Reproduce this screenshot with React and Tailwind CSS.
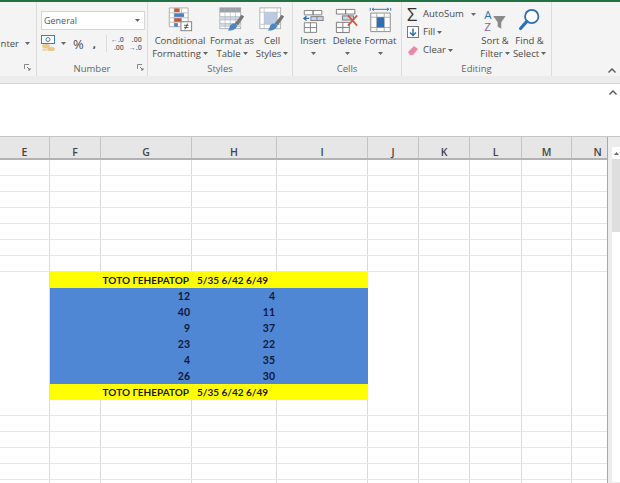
import React from "react";

const ui = { fontFamily: '"Open Sans", "Liberation Sans", sans-serif' };
const cellFont = { fontFamily: 'Lato, "Liberation Sans", sans-serif' };

const columns = [
  { name: "E", width: "w-[50px]" },
  { name: "F", width: "w-[51px]" },
  { name: "G", width: "w-[91px]" },
  { name: "H", width: "w-[85px]" },
  { name: "I", width: "w-[91px]" },
  { name: "J", width: "w-[51px]" },
  { name: "K", width: "w-[51px]" },
  { name: "L", width: "w-[52px]" },
  { name: "M", width: "w-[50px]" },
  { name: "N", width: "w-[36px]", label: "pl-[16px]" },
];

const numbers = [
  [12, 4],
  [40, 11],
  [9, 37],
  [23, 22],
  [4, 35],
  [26, 30],
];

function Caret({ className = "" }) {
  return (
    <svg width="5" height="3" viewBox="0 0 5 3" className={className}>
      <path d="M0 0h5L2.500 3z" fill="#666" />
    </svg>
  );
}

function Launcher({ className }) {
  return (
    <svg width="7" height="7" viewBox="0 0 7 7" className={`absolute ${className}`}>
      <path d="M.5 5V.5H5" fill="none" stroke="#888" />
      <path d="M3 3l3 3M6 4v2H4" fill="none" stroke="#777" />
    </svg>
  );
}

function ConditionalIcon() {
  return (
    <svg width="25" height="26" viewBox="0 0 28 29">
      <path d="M1.500 1h21v21h-21z" fill="#fff" stroke="#aaa" />
      <path d="M1 6.500h22M1 12h22M1 17h22M7 1v21M15 1v21" stroke="#bbb" />
      <rect x="7" y="1.500" width="6" height="4" fill="#c0563c" />
      <rect x="7" y="7" width="11" height="4" fill="#4c7fbd" />
      <rect x="7" y="12.500" width="8" height="4" fill="#c0563c" />
      <rect x="7" y="18" width="4" height="4" fill="#4c7fbd" />
      <rect x="14.500" y="16.500" width="12" height="10" fill="#fff" stroke="#777" />
      <path d="M18 20.500h5M18 23h5M22 18.500l-3 6.500" stroke="#444" fill="none" />
    </svg>
  );
}

function Brush() {
  return (
    <g>
      <path d="M18 19l8-10 3 2-7 10z" fill="#777" />
      <path d="M13 21c3-3 6-2 8 0 0 4-6 7-11 6 2-1 2-4 3-6z" fill="#4a86c4" />
    </g>
  );
}

function TableIcon() {
  return (
    <svg width="26" height="26" viewBox="0 0 30 30">
      <rect x="1" y="1" width="24" height="24" fill="#fff" stroke="#aaa" />
      <rect x="1" y="1" width="24" height="5" fill="#9a9fa8" />
      <rect x="1" y="11" width="24" height="4" fill="#cfd6e4" />
      <rect x="1" y="19" width="24" height="4" fill="#cfd6e4" />
      <path d="M1 6h24M1 11h24M1 15h24M1 19h24M7 1v24M13 1v24M19 1v24" stroke="#aeb4bd" strokeWidth=".7" />
      <Brush />
    </svg>
  );
}

function StylesIcon() {
  return (
    <svg width="26" height="26" viewBox="0 0 30 30">
      <rect x="1" y="1" width="24" height="24" fill="#fff" stroke="#aaa" />
      <rect x="6" y="6" width="15" height="14" fill="#bccbe4" />
      <path d="M6 1v24M21 1v24M1 6h24M1 20h24" stroke="#aeb4bd" strokeWidth=".7" />
      <Brush />
    </svg>
  );
}

function InsertIcon() {
  return (
    <svg width="21" height="24" viewBox="0 0 24 27">
      <path d="M1.500 1.500h10v5h-10zM11.500 1.500h10v5h-10z" fill="#fff" stroke="#777" />
      <path d="M1 10.500h6M4 8l-3 2.500L4 13" fill="none" stroke="#2d6fb3" strokeWidth="1.500" />
      <rect x="9" y="8.500" width="14" height="4.500" fill="#c6d4e6" stroke="#777" />
      <path d="M16 8.500v4.500" stroke="#777" />
      <path d="M1.500 15.500h14v11h-14zM1.500 21h14M8.500 15.500v11" fill="#fff" stroke="#777" />
    </svg>
  );
}

function DeleteIcon() {
  return (
    <svg width="24" height="25" viewBox="0 0 26 27">
      <path d="M1.500 1.500h10v5h-10zM11.500 1.500h10v5h-10z" fill="#fff" stroke="#777" />
      <rect x="8" y="8.500" width="12" height="4.500" fill="#c6d4e6" stroke="#777" />
      <path d="M1.500 15.500h14v11h-14zM1.500 21h14M8.500 15.500v11" fill="#fff" stroke="#777" />
      <path d="M14 8l10 11M24 8L14 19" stroke="#d2543c" strokeWidth="1.800" />
    </svg>
  );
}

function FormatIcon() {
  return (
    <svg width="23" height="26" viewBox="0 0 24 28">
      <path d="M1 1v3M23 1v3M3 2.500h18M3 2.500l2-1.500M3 2.500L5 4M21 2.500L19 1M21 2.500L19 4" stroke="#2d6fb3" fill="none" />
      <path d="M1.500 6.500h21v20h-21z" fill="#fff" stroke="#888" />
      <path d="M1.500 11h21M8 6.500v20M16 6.500v20M1.500 22h21" stroke="#aaa" />
      <rect x="8" y="11" width="8" height="11" fill="#2f6eb5" />
    </svg>
  );
}

function AccountingIcon() {
  return (
    <svg width="17" height="17" viewBox="0 0 17 17">
      <rect x=".5" y=".5" width="13" height="8" fill="#fff" stroke="#3d7cb8" />
      <circle cx="7" cy="4.500" r="2" fill="none" stroke="#3d7cb8" />
      <ellipse cx="5" cy="11" rx="4" ry="2" fill="#e7c98a" />
      <ellipse cx="10" cy="14" rx="4" ry="2" fill="#e7c98a" />
      <ellipse cx="4" cy="14.500" rx="3" ry="1.600" fill="#efdcb4" />
    </svg>
  );
}

function ChevronUp({ className = "" }) {
  return (
    <svg width="8" height="5" viewBox="0 0 8 5" className={className}>
      <path d="M.5 4.500L4 1l3.500 3.500" fill="none" stroke="#555" strokeWidth="1.400" />
    </svg>
  );
}

function BigButton({ width, icon, lines, caretBelow }) {
  return (
    <div className={`flex ${width} flex-col items-center text-[9.500px] leading-[13px] text-[#4a4a4a]`}>
      <div className="flex h-[27px] items-end">{icon}</div>
      <div className="mt-px whitespace-nowrap">{lines[0]}</div>
      {caretBelow ? (
        <Caret className="mt-[5px]" />
      ) : (
        <div className="flex items-center gap-[2px] whitespace-nowrap">
          {lines[1]}
          <Caret />
        </div>
      )}
    </div>
  );
}

function GroupLabel({ children }) {
  return (
    <div className="absolute bottom-[1px] left-0 right-0 text-center text-[9.500px] leading-[13px] text-[#666]">
      {children}
    </div>
  );
}

function Ribbon() {
  return (
    <div className="flex h-[74px] bg-[#f4f4f4]">
      {/* Alignment, cut off at the window edge */}
      <div className="relative flex w-[37px] shrink-0 items-start justify-end border-r border-[#dcdcdc] pr-[6px] pt-[35px] text-[9.500px] leading-[13px] text-[#4a4a4a]">
        <span className="mr-[6px]">nter</span>
        <Caret className="mt-[5px]" />
        <Launcher className="bottom-[5px] right-[5px]" />
      </div>

      {/* Number */}
      <div className="relative flex w-[111px] shrink-0 flex-col border-r border-[#dcdcdc] pl-[4px] pt-[9px]">
        <div className="flex h-[19px] w-[104px] items-center justify-between border border-[#d6d6d6] bg-white pl-[2px] pr-[4px] text-[9px] text-[#555]">
          General
          <Caret />
        </div>
        <div className="mt-[5px] flex items-center">
          <AccountingIcon />
          <Caret className="ml-[3px]" />
          <span className="ml-[7px] text-[13px] leading-[16px] text-[#4a4a4a]">%</span>
          <span className="ml-[9px] text-[11px] font-bold leading-[14px] text-[#444]">,</span>
          <div className="ml-[10px] h-[17px] w-px bg-[#dcdcdc]" />
          <div className="ml-[4px] flex flex-col items-end text-[7px] font-semibold leading-[8px] text-[#666]">
            <span className="text-[#2d6fb3]">←.0</span>
            <span>.00</span>
          </div>
          <div className="ml-[5px] flex flex-col items-end text-[7px] font-semibold leading-[8px] text-[#666]">
            <span>.00</span>
            <span className="text-[#2d6fb3]">→.0</span>
          </div>
        </div>
        <GroupLabel>Number</GroupLabel>
        <Launcher className="bottom-[5px] right-[3px]" />
      </div>

      {/* Styles */}
      <div className="relative flex w-[145px] shrink-0 border-r border-[#dcdcdc] pl-[5px] pt-[4px]">
        <BigButton width="w-[54px]" icon={<ConditionalIcon />} lines={["Conditional", "Formatting"]} />
        <BigButton width="w-[50px]" icon={<TableIcon />} lines={["Format as", "Table"]} />
        <BigButton width="w-[30px]" icon={<StylesIcon />} lines={["Cell", "Styles"]} />
        <GroupLabel>Styles</GroupLabel>
      </div>

      {/* Cells */}
      <div className="relative flex w-[109px] shrink-0 border-r border-[#dcdcdc] pl-[3px] pt-[4px]">
        <BigButton width="w-[34px]" icon={<InsertIcon />} lines={["Insert"]} caretBelow />
        <BigButton width="w-[34px]" icon={<DeleteIcon />} lines={["Delete"]} caretBelow />
        <BigButton width="w-[33px]" icon={<FormatIcon />} lines={["Format"]} caretBelow />
        <GroupLabel>Cells</GroupLabel>
      </div>

      {/* Editing */}
      <div className="relative flex w-[150px] shrink-0 border-r border-[#dcdcdc] pl-[5px] pt-[4px]">
        <div className="-mt-px flex w-[71px] flex-col text-[9.500px] leading-[18px] text-[#4a4a4a]">
          <div className="flex items-center">
            <span className="w-[16px] text-[18px] leading-[18px] text-[#333]">Σ</span>
            <span>AutoSum</span>
            <Caret className="ml-[7px]" />
          </div>
          <div className="flex items-center">
            <svg width="12" height="12" viewBox="0 0 12 12" className="mr-[4px]">
              <rect x=".5" y=".5" width="11" height="11" fill="#fff" stroke="#777" />
              <path d="M6 2.500v7M3 6.500L6 9.500 9 6.500" fill="none" stroke="#2d6fb3" strokeWidth="1.500" />
            </svg>
            <span>Fill</span>
            <Caret className="ml-[2px]" />
          </div>
          <div className="flex items-center">
            <svg width="12" height="11" viewBox="0 0 12 11" className="mr-[4px]">
              <path d="M1 7l6-6 4 3-5 6H3z" fill="#e78aa5" />
            </svg>
            <span>Clear</span>
            <Caret className="ml-[2px]" />
          </div>
        </div>
        <BigButton
          width="w-[34px]"
          icon={
            <svg width="24" height="25" viewBox="0 0 26 28">
              <text x="1" y="12" fontSize="13" fontFamily="Open Sans, sans-serif" fill="#2d6fb3">A</text>
              <text x="1" y="26" fontSize="13" fontFamily="Open Sans, sans-serif" fill="#8a62a8">Z</text>
              <path d="M11 9h14l-5 7v7l-4-2v-5z" fill="#8a8a8a" />
            </svg>
          }
          lines={["Sort &", "Filter"]}
        />
        <BigButton
          width="w-[35px]"
          icon={
            <svg width="23" height="25" viewBox="0 0 24 28">
              <circle cx="14.500" cy="9.500" r="7.500" fill="#fff" stroke="#2d6fb3" strokeWidth="2" />
              <path d="M9 15L2 23" stroke="#2d6fb3" strokeWidth="3.500" strokeLinecap="round" />
            </svg>
          }
          lines={["Find &", "Select"]}
        />
        <GroupLabel>Editing</GroupLabel>
      </div>

      <div className="flex flex-1 items-end justify-end pb-[3px] pr-[4px]">
        <ChevronUp />
      </div>
    </div>
  );
}

function BlankCells({ from, to }) {
  return columns.slice(from, to).map((col) => (
    <div key={col.name} className={`${col.width} shrink-0 border-r border-[#dadada]`} />
  ));
}

function TitleRow() {
  return (
    <div className="flex h-[16px]">
      <BlankCells from={0} to={1} />
      <div style={cellFont} className="flex w-[318px] shrink-0 bg-[#ffff00] text-[10px] font-bold leading-[16px] text-[#1a1a1a]">
        <div className="w-[139px] shrink-0 whitespace-nowrap text-right">ТОТО ГЕНЕРАТОР</div>
        <div className="whitespace-nowrap pl-[8px]">5/35 6/42 6/49</div>
      </div>
      <BlankCells from={5} to={10} />
    </div>
  );
}

function NumberRow({ values }) {
  return (
    <div className="flex h-[16px]">
      <BlankCells from={0} to={1} />
      <div style={cellFont} className="flex w-[318px] shrink-0 bg-[#4f87d4] text-[10.500px] font-bold leading-[16px] text-[#10183a]">
        <div className="w-[140px] shrink-0 text-right">{values[0]}</div>
        <div className="w-[87px] shrink-0 pr-[2px] text-right">{values[1]}</div>
      </div>
      <BlankCells from={5} to={10} />
    </div>
  );
}

function EmptyRow() {
  return (
    <div className="flex h-[16px] border-b-[1.500px] border-[#e6e6e6]">
      <BlankCells from={0} to={10} />
    </div>
  );
}

function Sheet() {
  return (
    <div className="flex">
      <div className="w-[608px] shrink-0 overflow-hidden border-r border-[#a8a8a8] bg-white">
        {/* Column letters */}
        <div style={ui} className="flex h-[23px] border-b-2 border-[#b2b2b2] bg-[#e6e6e6] text-[10.500px] font-semibold leading-[30px] text-[#444]">
          {columns.map((col) => (
            <div key={col.name} className={`${col.width} ${col.label || ""} shrink-0 border-r border-[#c4c4c4] text-center`}>
              {col.name}
            </div>
          ))}
        </div>
        {Array.from({ length: 7 }, (_, i) => <EmptyRow key={i} />)}
        <TitleRow />
        {numbers.map((values, i) => <NumberRow key={i} values={values} />)}
        <TitleRow />
        {Array.from({ length: 6 }, (_, i) => <EmptyRow key={i} />)}
      </div>
      {/* Vertical scrollbar */}
      <div className="flex flex-1 flex-col items-end bg-[#ececec] pt-[10px]">
        <div className="flex h-[12px] w-[8px] items-center justify-center bg-white">
          <svg width="5" height="3" viewBox="0 0 5 3"><path d="M0 3h5L2.500 0z" fill="#666" /></svg>
        </div>
        <div className="h-[73px] w-[8px] bg-[#dedede]" />
        <div className="h-[250px] w-[8px] bg-white" />
      </div>
    </div>
  );
}

export default function App() {
  return (
    <div style={ui} className="h-[483px] w-[620px] overflow-hidden bg-white">
      <div className="h-[2px] bg-[#217346]" />
      <Ribbon />
      <div className="h-[8px] border-b border-[#d6d6d6] bg-[#ececec]" />
      <div className="flex h-[52px] justify-end bg-white pr-[3px] pt-[6px]">
        <ChevronUp />
      </div>
      <div className="h-px bg-[#c6c6c6]" />
      <Sheet />
    </div>
  );
}
